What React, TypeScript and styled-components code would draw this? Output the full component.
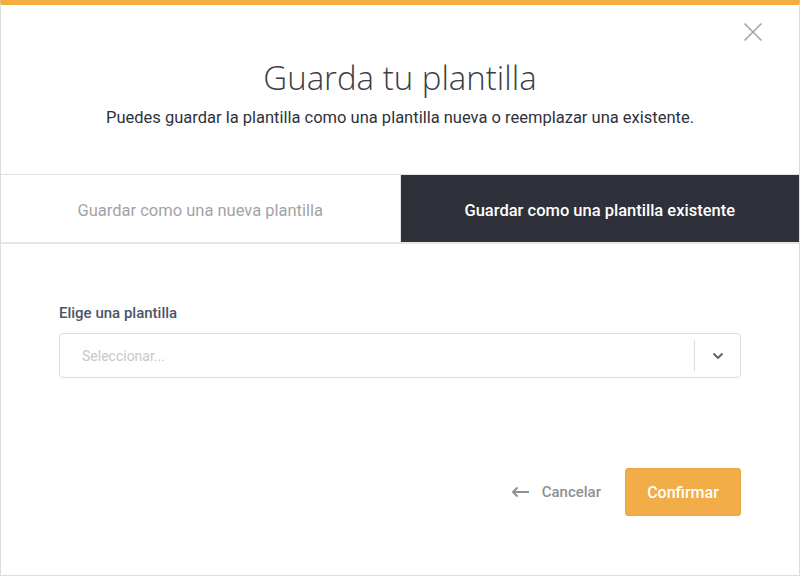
import React from 'react';
import styled, { createGlobalStyle } from 'styled-components';

const GlobalStyle = createGlobalStyle`
  html, body {
    margin: 0;
    padding: 0;
    background: #ffffff;
  }
  body {
    font-family: Roboto, "Liberation Sans", sans-serif;
  }
`;

const Modal = styled.div`
  box-sizing: border-box;
  width: 800px;
  height: 576px;
  display: flex;
  flex-direction: column;
  background: #fff;
  border-top: 5px solid #f4ae40;
  border-left: 1px solid #dcdcdc;
  border-right: 1px solid #dcdcdc;
  border-bottom: 1px solid #dcdcdc;
  position: relative;
`;

const CloseButton = styled.button`
  position: absolute;
  top: 17px;
  right: 36px;
  width: 20px;
  height: 20px;
  padding: 0;
  border: none;
  background: none;
  cursor: pointer;
  display: flex;
  align-items: center;
  justify-content: center;
`;

const Header = styled.header`
  display: flex;
  flex-direction: column;
  align-items: center;
  padding-top: 52px;
  height: 169px;
  box-sizing: border-box;
`;

const Title = styled.h1`
  margin: 0;
  font-family: "Open Sans", sans-serif;
  font-weight: 300;
  font-size: 33px;
  line-height: 42px;
  color: #3b3e45;
`;

const Subtitle = styled.p`
  margin: 9px 0 0;
  font-size: 16.5px;
  line-height: 20px;
  color: #2f323a;
`;

const Tabs = styled.div`
  display: flex;
  height: 70px;
  box-sizing: border-box;
  border-top: 1px solid #e2e2e2;
  border-bottom: 2px solid #e6e6e6;
`;

const Tab = styled.button<{ active?: boolean }>`
  flex: 1;
  border: none;
  margin: 0;
  padding: 3px 0 0;
  font-family: Roboto, sans-serif;
  font-size: 16.5px;
  font-weight: ${({ active }) => (active ? 500 : 400)};
  background: ${({ active }) => (active ? '#2e3139' : '#ffffff')};
  color: ${({ active }) => (active ? '#ffffff' : '#a3a3a6')};
  border-left: ${({ active }) => (active ? '1px solid #e2e2e2' : 'none')};
  cursor: pointer;
`;

const Body = styled.div`
  flex: 1;
  display: flex;
  flex-direction: column;
  padding: 60px 58px 0 58px;
`;

const Label = styled.label`
  font-size: 15px;
  font-weight: 500;
  color: #4c5468;
  line-height: 18px;
`;

const Select = styled.div`
  margin-top: 11px;
  height: 45px;
  box-sizing: border-box;
  border: 1px solid #dddddd;
  border-radius: 4px;
  display: flex;
  align-items: center;
`;

const Placeholder = styled.span`
  flex: 1;
  padding-left: 22px;
  font-size: 14px;
  color: #c8c8c8;
`;

const Separator = styled.span`
  width: 1px;
  align-self: stretch;
  margin: 6px 0;
  background: #dddddd;
`;

const Arrow = styled.span`
  width: 45px;
  display: flex;
  align-items: center;
  justify-content: center;
`;

const Footer = styled.div`
  display: flex;
  justify-content: flex-end;
  align-items: center;
  gap: 24px;
  margin-top: 90px;
`;

const CancelButton = styled.button`
  display: flex;
  align-items: center;
  gap: 12px;
  border: none;
  background: none;
  padding: 0;
  font-family: Roboto, sans-serif;
  font-size: 15px;
  font-weight: 500;
  color: #8f9096;
  cursor: pointer;
`;

const ConfirmButton = styled.button`
  width: 116px;
  height: 48px;
  border: 1px solid #eaa640;
  border-radius: 3px;
  background: #f2ac48;
  color: #fff;
  font-family: Roboto, sans-serif;
  font-size: 16px;
  font-weight: 500;
  cursor: pointer;
`;

const App: React.FC = () => (
  <>
    <GlobalStyle />
    <Modal>
      <CloseButton aria-label="Cerrar">
        <svg width="20" height="20" viewBox="0 0 20 20">
          <path d="M1.5 1.5 L18.5 18.5 M18.5 1.5 L1.5 18.5" stroke="#a4a4a4" strokeWidth="1.6" />
        </svg>
      </CloseButton>
      <Header>
        <Title>Guarda tu plantilla</Title>
        <Subtitle>Puedes guardar la plantilla como una plantilla nueva o reemplazar una existente.</Subtitle>
      </Header>
      <Tabs>
        <Tab>Guardar como una nueva plantilla</Tab>
        <Tab active>Guardar como una plantilla existente</Tab>
      </Tabs>
      <Body>
        <Label>Elige una plantilla</Label>
        <Select>
          <Placeholder>Seleccionar...</Placeholder>
          <Separator />
          <Arrow>
            <svg width="12" height="8" viewBox="0 0 12 8">
              <path d="M1.5 1.5 L6 6 L10.5 1.5" stroke="#5a5d63" strokeWidth="1.8" fill="none" />
            </svg>
          </Arrow>
        </Select>
        <Footer>
          <CancelButton>
            <svg width="19" height="12" viewBox="0 0 19 12">
              <path d="M18 6 H2 M6.5 1.5 L2 6 L6.5 10.5" stroke="#8f9096" strokeWidth="2" fill="none" />
            </svg>
            Cancelar
          </CancelButton>
          <ConfirmButton>Confirmar</ConfirmButton>
        </Footer>
      </Body>
    </Modal>
  </>
);

export default App;
